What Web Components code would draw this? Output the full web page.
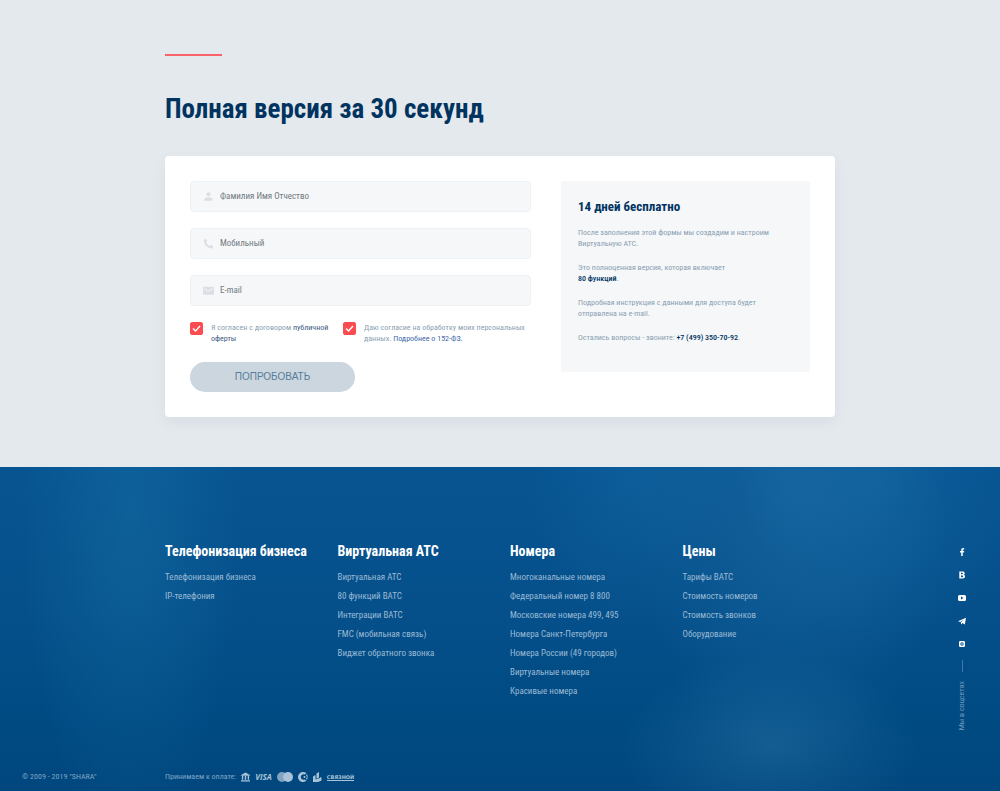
<!DOCTYPE html>
<html lang="ru">
<head>
<meta charset="utf-8">
<meta name="viewport" content="width=device-width, initial-scale=1">
<title>SHARA — виртуальная АТС</title>
<style>
  html { background: #e4e9ed; }
  body {
    margin: 0;
    min-height: 100vh;
    display: flex;
    flex-direction: column;
    font-family: "Roboto Condensed", Roboto, sans-serif;
    font-size: 8px;
    --navy: #00335f;
    --red: #fb4c52;
    --muted: #8b9fb2;
    --panel: #f5f7f9;
    --page-width: 670px;
  }
  site-footer { flex: 1; }
</style>
</head>
<body>
<trial-section>
  <span slot="title">Полная версия за 30 секунд</span>
  <trial-form slot="form"></trial-form>
  <info-panel slot="info"></info-panel>
</trial-section>
<site-footer>
  <footer-column heading="Телефонизация бизнеса">
    <a href="#">Телефонизация бизнеса</a>
    <a href="#">IP-телефония</a>
  </footer-column>
  <footer-column heading="Виртуальная АТС">
    <a href="#">Виртуальная АТС</a>
    <a href="#">80 функций ВАТС</a>
    <a href="#">Интеграции ВАТС</a>
    <a href="#">FMC (мобильная связь)</a>
    <a href="#">Виджет обратного звонка</a>
  </footer-column>
  <footer-column heading="Номера">
    <a href="#">Многоканальные номера</a>
    <a href="#">Федеральный номер 8 800</a>
    <a href="#">Московские номера 499, 495</a>
    <a href="#">Номера Санкт-Петербурга</a>
    <a href="#">Номера России (49 городов)</a>
    <a href="#">Виртуальные номера</a>
    <a href="#">Красивые номера</a>
  </footer-column>
  <footer-column heading="Цены">
    <a href="#">Тарифы ВАТС</a>
    <a href="#">Стоимость номеров</a>
    <a href="#">Стоимость звонков</a>
    <a href="#">Оборудование</a>
  </footer-column>
  <social-links slot="social"></social-links>
  <span slot="copyright">© 2009 - 2019 "SHARA"</span>
  <payment-methods slot="payments"></payment-methods>
</site-footer>

<script>
const define = (name, html, setup) => customElements.define(name, class extends HTMLElement {
  connectedCallback() {
    if (this.shadowRoot) return;
    this.attachShadow({ mode: "open" }).innerHTML = html;
    if (setup) setup(this, this.shadowRoot);
  }
});

define("trial-section", `
<style>
  :host { display: block; padding: 54px 16px 50px; }
  .wrap { max-width: var(--page-width); margin: 0 auto; }
  .rule { width: 57px; height: 2px; background: var(--red); opacity: .85; }
  h2 { margin: 37px 0 31px; font-size: 27px; line-height: 32px; font-weight: 700; color: var(--navy); }
  .card {
    display: grid; grid-template-columns: minmax(0, 341fr) minmax(0, 249fr); gap: 30px;
    align-items: start; padding: 25px; border-radius: 4px; background: #fff;
    box-shadow: 0 5px 14px rgba(60, 100, 140, .08);
  }
  @media (max-width: 620px) { .card { grid-template-columns: 1fr; } }
</style>
<div class="wrap">
  <div class="rule"></div>
  <h2><slot name="title"></slot></h2>
  <div class="card"><slot name="form"></slot><slot name="info"></slot></div>
</div>`);

define("trial-form", `
<style>
  :host { display: block; }
  form { display: grid; gap: 16px; }
  .consents { display: grid; grid-template-columns: 143px minmax(0, 1fr); gap: 10px; }
  a { color: #3f6aa8; text-decoration: none; }
  a.dark { color: #3f5a80; }
  button {
    justify-self: start; width: 165px; height: 30px; margin-top: 2px; padding: 0; border: 0;
    border-radius: 15px; background: #ccd6df; color: #557d9b;
    font: 10px/30px "Liberation Sans", sans-serif;
  }
</style>
<form>
  <form-field label="Фамилия Имя Отчество" icon="user"></form-field>
  <form-field label="Мобильный" icon="phone"></form-field>
  <form-field label="E-mail" icon="mail"></form-field>
  <div class="consents">
    <consent-check>Я согласен с договором <a class="dark" href="#">публичной оферты</a></consent-check>
    <consent-check>Даю согласие на обработку моих персональных данных. <a href="#">Подробнее о 152-ФЗ.</a></consent-check>
  </div>
  <button type="button">ПОПРОБОВАТЬ</button>
</form>`);

const fieldIcons = {
  user: '<circle cx="6" cy="3.500" r="2.200"/><path d="M1.500 10.500V9.200C1.500 7.500 4 6.700 6 6.700s4.500.8 4.500 2.500v1.300z"/>',
  phone: '<path d="M1.700 1.300h2l.8 2.400-1.200 1.200a8 8 0 0 0 3.800 3.800l1.200-1.200 2.500.8v2A1.200 1.200 0 0 1 9.500 11.400 8.800 8.800 0 0 1 .9 2.500 1.200 1.200 0 0 1 1.700 1.300z"/>',
  mail: '<path fill-rule="evenodd" d="M1 2h10q1 0 1 1v6.500q0 1-1 1H1q-1 0-1-1V3q0-1 1-1zM1.200 3.300v1L6 7.400l4.800-3.100v-1L6 6.400z"/>'
};
define("form-field", `
<style>
  :host { display: block; }
  label {
    display: flex; align-items: center; gap: 6px; height: 31px; padding: 0 12px;
    box-sizing: border-box; border: 1px solid #edf1f4; border-radius: 4px; background: var(--panel);
  }
  svg { flex: none; width: 11px; height: 11px; fill: #dbdfe4; }
  input {
    flex: 1; min-width: 0; height: 16px; padding: 0 0 2px; border: 0; outline: 0; background: none;
    box-sizing: border-box; font: inherit; font-size: 9px; color: #56687a;
  }
  input::placeholder { color: #72797f; opacity: 1; }
</style>
<label><svg viewBox="0 0 12 12" aria-hidden="true"></svg><input type="text"></label>`, (host, root) => {
  const input = root.querySelector("input");
  input.placeholder = host.getAttribute("label");
  input.setAttribute("aria-label", host.getAttribute("label"));
  root.querySelector("svg").innerHTML = fieldIcons[host.getAttribute("icon")];
});

define("consent-check", `
<style>
  :host { display: block; color: var(--muted); font-size: 8px; line-height: 11px; }
  label { display: grid; grid-template-columns: 13px minmax(0, 1fr); gap: 8px; align-items: start; }
  .box { display: grid; height: 13px; }
  .box > * { grid-area: 1 / 1; width: 13px; height: 13px; margin: 0; }
  input { appearance: none; border-radius: 2px; border: 1px solid var(--red); box-sizing: border-box; }
  input:checked { background: var(--red); }
  svg { pointer-events: none; fill: none; stroke: #fff; stroke-width: 1.4; }
</style>
<label>
  <span class="box"><input type="checkbox" checked><svg viewBox="0 0 13 13" aria-hidden="true"><path d="M3 6.500 5.500 9 10 4"/></svg></span>
  <span><slot></slot></span>
</label>`);

define("info-panel", `
<style>
  :host { display: block; padding: 17px 17px 28px; border-radius: 2px; background: var(--panel); color: var(--muted); }
  h3 { margin: 0 0 11px; font-size: 13px; line-height: 18px; font-weight: 700; color: var(--navy); }
  p { margin: 0 0 13px; font-size: 8px; line-height: 11px; }
  p:last-child { margin: 0; line-height: 12px; }
  a { color: var(--navy); font-weight: 500; text-decoration: none; }
  .line { display: block; }
</style>
<h3>14 дней бесплатно</h3>
<p>После заполнения этой формы мы создадим и настроим Виртуальную АТС.</p>
<p>Это полноценная версия, которая включает <span class="line"><a href="#">80 функций</a>.</span></p>
<p>Подробная инструкция с данными для доступа будет отправлена на e-mail.</p>
<p>Остались вопросы - звоните: <a href="tel:+74993507092">+7 (499) 350-70-92</a>.</p>`);

define("site-footer", `
<style>
  :host {
    display: grid; grid-template-columns: minmax(0, 1fr) minmax(0, var(--page-width)) minmax(0, 1fr);
    grid-template-rows: 1fr auto; row-gap: 32px; padding: 74px 0 6px; color: #fff;
    background:
      radial-gradient(ellipse 15% 28% at 77% 86%, rgba(50, 125, 175, .36), transparent),
      radial-gradient(ellipse 16% 90% at 79% 5%, rgba(50, 130, 185, .3), transparent),
      radial-gradient(ellipse 14% 50% at 88% 5%, rgba(30, 120, 180, .28), transparent),
      radial-gradient(ellipse 10% 45% at 63% 4%, rgba(30, 120, 180, .25), transparent),
      radial-gradient(ellipse 11% 100% at 13% 15%, rgba(30, 125, 175, .32), transparent),
      linear-gradient(180deg, #075491 0%, #05508b 45%, #004a82 80%, #00477e 100%);
  }
  nav { grid-column: 2; display: grid; grid-template-columns: repeat(auto-fit, minmax(140px, 1fr)); gap: 20px; align-items: start; }
  .social { grid-column: 3; justify-self: end; padding-right: 32px; }
  .copyright, .payments { font-size: 8px; line-height: 16px; color: #7fa5c4; }
  .copyright { padding-left: 22px; grid-column: 1; }
</style>
<nav><slot></slot></nav>
<div class="social"><slot name="social"></slot></div>
<div class="copyright"><slot name="copyright"></slot></div>
<div class="payments"><slot name="payments"></slot></div>`);

define("footer-column", `
<style>
  :host { display: flex; flex-direction: column; align-items: start; }
  h4 { margin: 0 0 7px; font-size: 14px; line-height: 20px; font-weight: 700; white-space: nowrap; }
  ::slotted(a) { color: #9cbbd4; font-size: 9px; line-height: 19px; text-decoration: none; white-space: nowrap; }
</style>
<h4></h4><slot></slot>`, (host, root) => {
  root.querySelector("h4").textContent = host.getAttribute("heading");
});

define("social-links", `
<style>
  :host { display: flex; flex-direction: column; align-items: center; gap: 9px; padding-top: 4px; }
  a { display: grid; place-items: center; width: 12px; height: 14px; }
  svg { display: block; width: 12px; height: 10px; fill: #fff; }
  .bar { width: 1px; height: 12px; background: #3f79aa; }
  .caption { writing-mode: vertical-rl; transform: rotate(180deg); font-size: 8px; line-height: 12px; color: #6f9abf; }
</style>
<a href="#" aria-label="Facebook"><svg viewBox="0 0 12 10"><path d="M5.200 9V5.500H4V4.100h1.200V3.200C5.200 1.800 6 1 7.300 1H8.200v1.400h-.7c-.6 0-.8.3-.8.8v.9h1.500L8 5.500H6.700V9z"/></svg></a>
<a href="#" aria-label="ВКонтакте"><svg viewBox="0 0 12 10"><path fill-rule="evenodd" d="M3.300 1.500h3.200c1.500 0 2.200.7 2.200 1.700 0 .8-.4 1.300-1 1.600.8.2 1.300.8 1.300 1.700 0 1.300-.9 2-2.400 2H3.300zM5 2.800v1.500h1c.6 0 .9-.3.9-.8s-.3-.7-.9-.7zM5 5.500v1.700h1.200c.6 0 1-.3 1-.9s-.4-.8-1-.8z"/></svg></a>
<a href="#" aria-label="YouTube"><svg viewBox="0 0 12 10"><path fill-rule="evenodd" d="M3.500 2h5Q10 2 10 3.500v3Q10 8 8.500 8h-5Q2 8 2 6.500v-3Q2 2 3.500 2zM5 3.500v3L7.500 5z"/></svg></a>
<a href="#" aria-label="Telegram"><svg viewBox="0 0 12 10"><path d="M2 5.200 10 1.700 8.800 8.500 6.500 7 5.300 8.400 4.800 6.500 8 3.600 4.300 6z"/></svg></a>
<a href="#" aria-label="Instagram"><svg viewBox="0 0 12 10"><path fill-rule="evenodd" d="M4.200 2h3.600Q9 2 9 3.200v3.600Q9 8 7.800 8H4.200Q3 8 3 6.800V3.200Q3 2 4.200 2zM6 3.300a1.700 1.700 0 1 0 0 3.400 1.700 1.700 0 0 0 0-3.400z"/><circle cx="6" cy="5" r=".8"/></svg></a>
<span class="bar"></span>
<span class="caption">Мы в соцсетях</span>`);

define("payment-methods", `
<style>
  :host { display: flex; align-items: center; gap: 5px; color: #7fa5c4; }
  svg { display: block; flex: none; height: 10px; fill: #a9c3d8; }
  .visa { font: italic 700 8px/10px "Open Sans", sans-serif; color: #a9c3d8; }
  .svz {
    border-bottom: 1px solid #a9c3d8;
    font: 700 5px/6px "DejaVu Sans", sans-serif; color: #a9c3d8;
  }
</style>
<span>Принимаем к оплате:</span>
<svg width="9" viewBox="0 0 10 10"><path d="M0 2.700 5 0l5 2.700v.8H0zM1 4h1.500v4H1zM4.200 4h1.600v4H4.200zM7.500 4H9v4H7.500zM0 8.600h10V10H0z"/></svg>
<span class="visa">VISA</span>
<svg width="16" viewBox="0 0 16 10"><circle cx="5" cy="5" r="5" opacity=".75"/><circle cx="11" cy="5" r="5"/></svg>
<svg width="10" viewBox="0 0 10 10"><path fill-rule="evenodd" d="M5 0a5 5 0 0 1 3.500 1.400L6.500 2.500a2.700 2.700 0 1 0 0 5L8.500 8.600A5 5 0 1 1 5 0z"/><circle cx="6.500" cy="5" r="1"/><circle cx="8.800" cy="3.300" r=".8"/><circle cx="9.200" cy="5" r=".8"/><circle cx="8.800" cy="6.700" r=".8"/></svg>
<svg width="9" viewBox="0 0 9 10"><path d="M0 4.500 2.500 3v4.500L7 6v-1l1.500.8V8.500L5 10H0zM3.500 1.500 6 0v5.500L3.500 6.700z"/></svg>
<span class="svz">СВЯЗНОЙ</span>`);
</script>
</body>
</html>
